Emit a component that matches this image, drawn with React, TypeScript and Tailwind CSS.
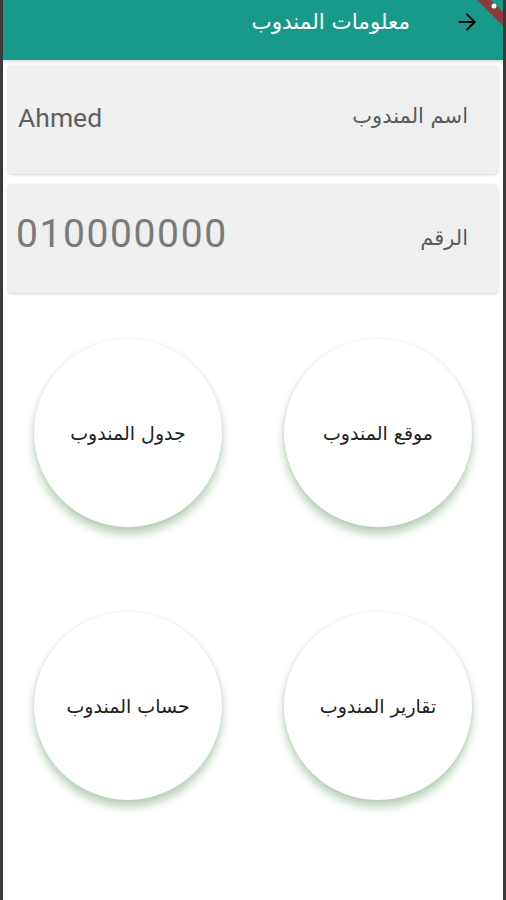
import { ArrowRight } from "lucide-react";

const ACTIONS = ["موقع المندوب", "جدول المندوب", "تقارير المندوب", "حساب المندوب"];

function InfoCard({ label, value, big }: { label: string; value: string; big?: boolean }) {
  return (
    <div className="flex h-[109px] items-center justify-between rounded bg-[#efefef] pr-[30px] pl-[8px] shadow-[0_1px_3px_rgba(0,0,0,0.18)]">
      <span className={`font-['DejaVu_Sans',sans-serif] text-[21px] text-[#5a5a5a] ${big ? "" : "-mt-[6px]"}`}>
        {label}
      </span>
      <span
        dir="ltr"
        className={
          big
            ? "-mt-[8px] font-['Roboto',sans-serif] text-[39px] tracking-[1.6px] text-[#7a7a7a]"
            : "-mt-[4px] pl-[2px] font-['Roboto',sans-serif] text-[26.5px] text-[#5f5f5f]"
        }
      >
        {value}
      </span>
    </div>
  );
}

export default function App() {
  return (
    <div dir="rtl" className="relative flex min-h-[900px] flex-col border-x-[3px] border-x-[#3c3c3c] bg-white">
      <header className="flex h-[60px] items-center gap-[44px] bg-[#179a8a] pr-[23px] pb-[16px] shadow-[0_2px_3px_rgba(0,0,0,0.15)]">
        <ArrowRight className="size-[26px] text-black" strokeWidth={1.8} />
        <h1 className="font-['DejaVu_Sans',sans-serif] text-[21.5px] text-white">معلومات المندوب</h1>
      </header>

      {/* debug ribbon */}
      <svg className="absolute right-0 top-0" width="36" height="36" viewBox="0 0 36 36">
        <polygon points="10,0 24,0 36,12 36,26" fill="#8b3a3a" />
        <circle cx="27" cy="6" r="2.5" fill="#fff" />
      </svg>

      <div className="flex flex-col gap-[10px] px-[5px] pt-[5px]">
        <InfoCard label="اسم المندوب" value="Ahmed" />
        <InfoCard label="الرقم" value="010000000" big />
      </div>

      <div className="mt-[46px] grid grid-cols-2 gap-y-[85px]">
        {ACTIONS.map((a) => (
          <div key={a} className="flex justify-center">
            <button
              type="button"
              className="flex size-[188px] items-center justify-center rounded-full bg-white font-['DejaVu_Sans',sans-serif] text-[19px] text-[#222] shadow-[0_7px_10px_rgba(80,140,80,0.4),0_0_4px_rgba(0,0,0,0.08)]"
            >
              {a}
            </button>
          </div>
        ))}
      </div>
    </div>
  );
}
